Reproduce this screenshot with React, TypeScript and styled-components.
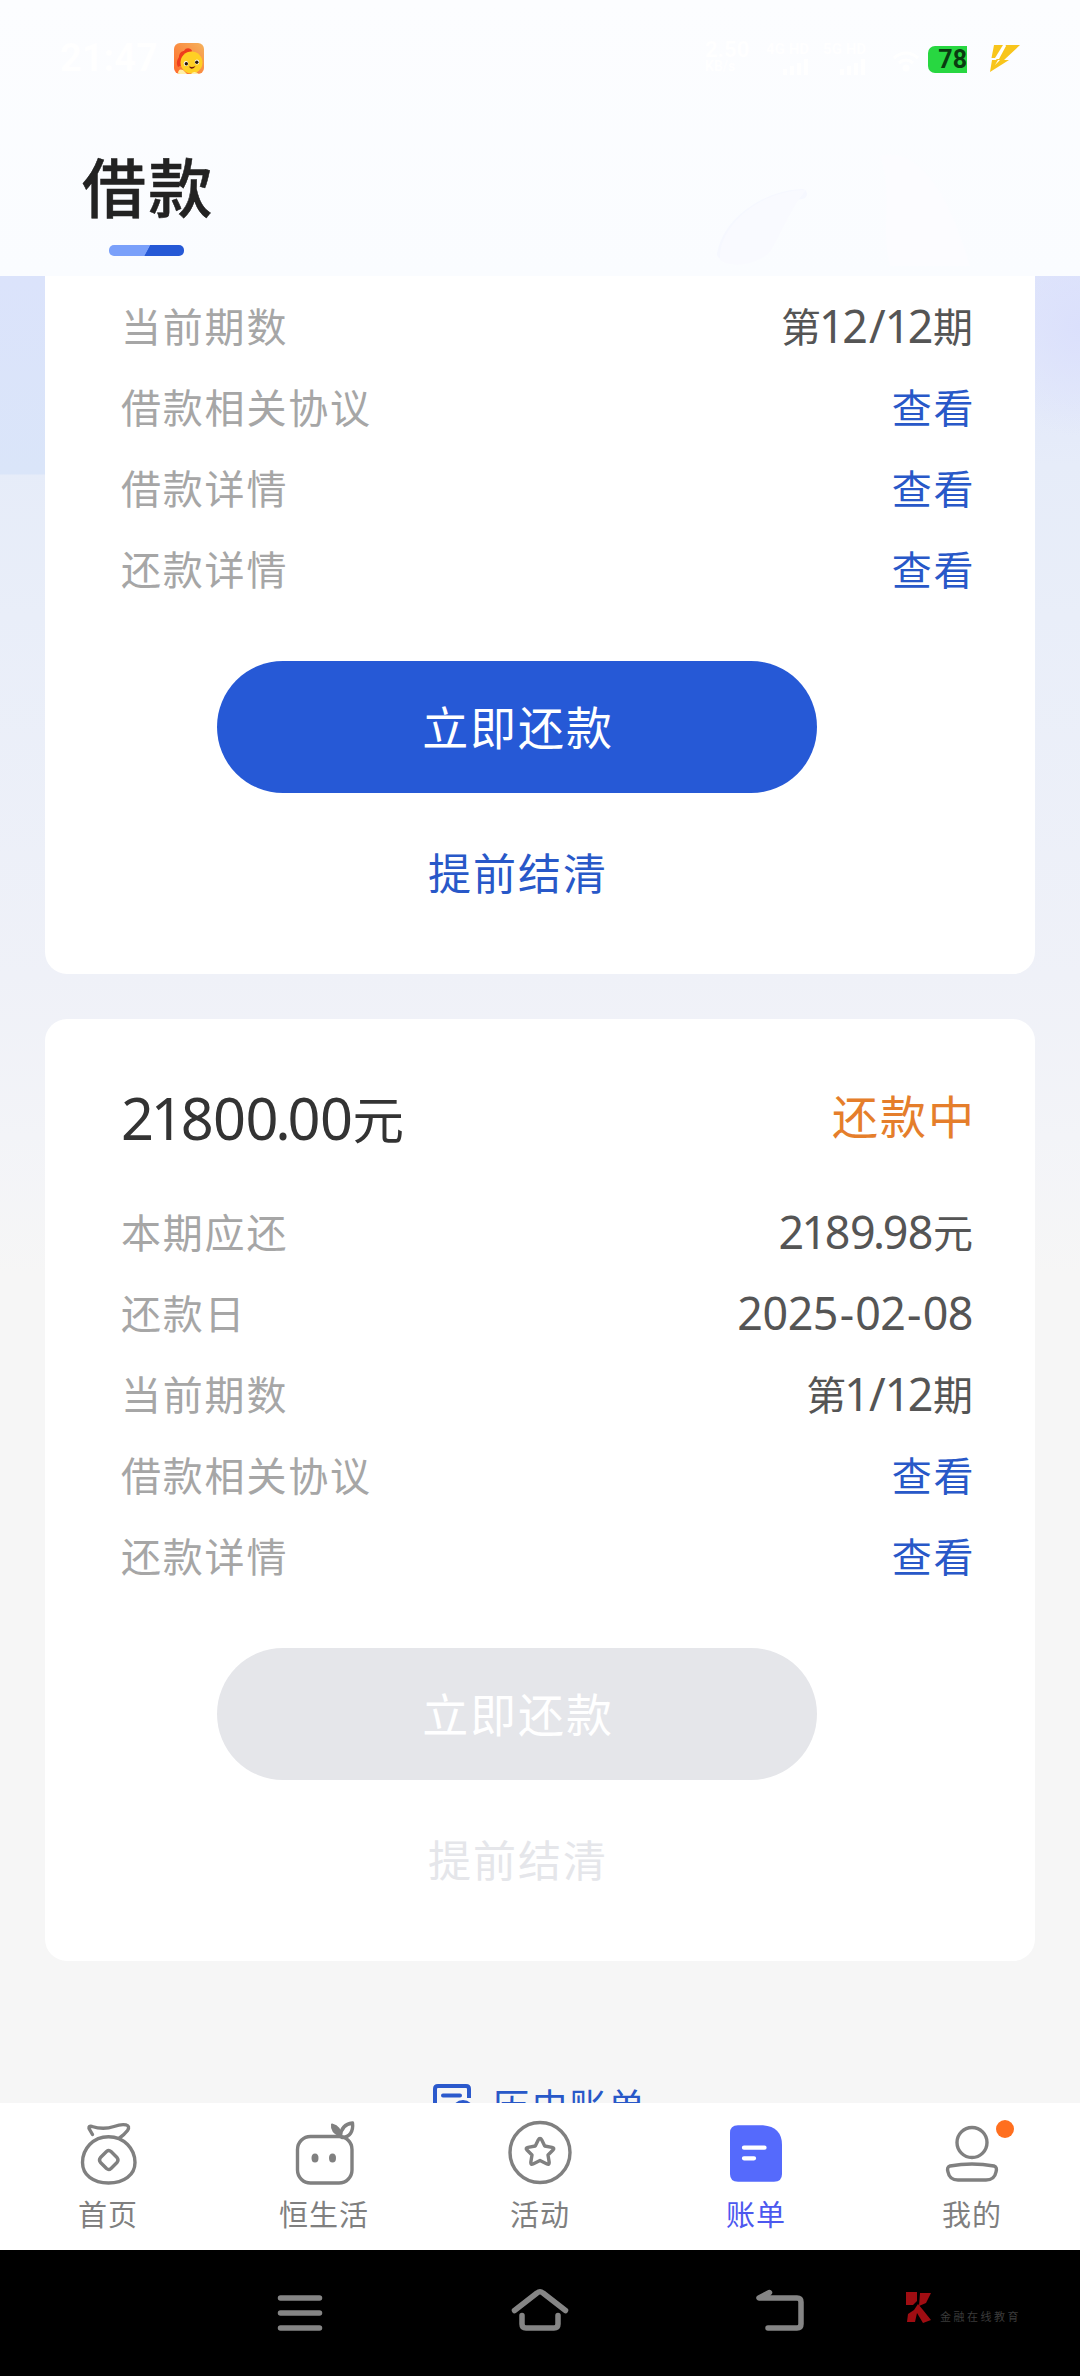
import React from 'react';
import styled, { createGlobalStyle } from 'styled-components';

const cjk = `"Noto Sans CJK SC", "Noto Sans", sans-serif`;

const GlobalStyle = createGlobalStyle`
  * { box-sizing: border-box; }
  body { margin: 0; font-family: ${cjk}; background: #f6f6f6; }
`;

const Screen = styled.div`
  width: 1080px;
  height: 2376px;
  display: flex;
  flex-direction: column;
  overflow: hidden;
  background: #f6f6f6;
`;

const Header = styled.header`
  position: relative;
  height: 276px;
  flex: none;
  background: linear-gradient(#fcfdff, #fafcff);
`;

const HeaderArt = styled.svg`
  position: absolute;
  right: 0;
  bottom: 0;
`;

const StatusBar = styled.div`
  position: relative;
  display: flex;
  align-items: center;
  height: 116px;
  padding: 0 60px;
`;

const Clock = styled.span`
  width: 114px;
  font: 700 38px/1 Roboto, sans-serif;
  color: #fff;
`;

const StatusRight = styled.div`
  display: flex;
  align-items: center;
  margin-left: auto;
`;

const NetSpeed = styled.div`
  width: 56px;
  font: 700 22px/16px Roboto, sans-serif;
  color: #fff;
  small {
    display: block;
    font-size: 14px;
  }
`;

const Signal = styled.div`
  display: flex;
  flex-direction: column;
  align-items: flex-end;
  gap: 3px;
  width: 48px;
  margin-right: 9px;
  font: 700 15px/14px Roboto, sans-serif;
  color: #fff;
`;

const Wifi = styled.svg`
  margin: 6px 8px 0 17px;
`;

const Battery = styled.div`
  width: 39px;
  height: 27px;
  margin: 2px 23px 0 0;
  border-radius: 7px 0 0 7px;
  background: #28d741;
  color: #0a3a10;
  font: 700 25px/28px Roboto, sans-serif;
  text-align: right;
`;

const TitleBlock = styled.div`
  position: relative;
  display: flex;
  flex-direction: column;
  align-items: flex-start;
  padding-left: 82px;
`;

const Title = styled.h1`
  margin: 23px 0 0;
  height: 90px;
  font-size: 64px;
  line-height: 90px;
  font-weight: 500;
  letter-spacing: 2.2px;
  -webkit-text-stroke: 0.5px #222;
  color: #222;
`;

const TitleMark = styled.div`
  width: 75px;
  height: 11px;
  margin: 16px 0 0 27px;
  border-radius: 5px;
  background: linear-gradient(118deg, #7aa0fa 50.5%, #2659d6 51.5%);
`;

const ScrollArea = styled.main`
  height: 1827px;
  flex: none;
  overflow: hidden;
  display: flex;
  flex-direction: column;
  align-items: center;
  gap: 45px;
  background:
    radial-gradient(ellipse 90px 110px at 1080px 50px, #dbe0fc 0%, rgba(219, 224, 252, 0) 100%),
    linear-gradient(#dbe3fb 0, #dae5f9 198px, rgba(218, 229, 249, 0) 199px) 0 0 / 45px 100% no-repeat,
    linear-gradient(#dfe5fb 0, #e6ecf9 190px, #e9eef9 340px, #eff1f8 700px, #f3f4f8 860px, #f6f6f6 1000px);
`;

const Card = styled.section<{ $first?: boolean }>`
  display: flex;
  flex-direction: column;
  width: 990px;
  height: ${(p) => (p.$first ? 698 : 942)}px;
  flex: none;
  padding: ${(p) => (p.$first ? '11px' : '44px')} 61px 0 76px;
  border-radius: ${(p) => (p.$first ? '0 0 22px 22px' : '22px')};
  background: #fff;
`;

const CardHead = styled.div`
  display: flex;
  justify-content: space-between;
  align-items: center;
  height: 102px;
  margin-bottom: 28px;
`;

const Amount = styled.div`
  padding-top: 5px;
  font-size: 51.5px;
  line-height: 66px;
  color: #333;
`;

const Status = styled.div`
  font-size: 46px;
  letter-spacing: 2px;
  margin-right: -2px;
  color: #e57e2b;
`;

const Row = styled.div`
  display: flex;
  justify-content: space-between;
  align-items: center;
  height: 81px;
  padding-bottom: 5px;
  font-size: 40px;
  line-height: 60px;
`;

const Label = styled.span`
  color: #a6a6a6;
  letter-spacing: 1.8px;
`;

const Value = styled.span<{ $link?: boolean }>`
  color: ${(p) => (p.$link ? '#2858c8' : '#555')};
  letter-spacing: ${(p) => (p.$link ? 1.6 : 0)}px;
  margin-right: ${(p) => (p.$link ? -1 : 1)}px;
`;

type GlyphKind = 'plain' | 'narrow' | 'wide';
const glyphMargin: Record<GlyphKind, string> = { plain: '0', narrow: '-0.045em', wide: '0.035em' };

const Digit = styled.span<{ $kind: GlyphKind }>`
  font-family: "Noto Sans", sans-serif;
  font-size: 1.12em;
  line-height: 0;
  vertical-align: -0.02em;
  letter-spacing: -0.01em;
  margin: 0 ${(p) => glyphMargin[p.$kind]};
`;

const PayButton = styled.button<{ $disabled?: boolean }>`
  width: 600px;
  height: 132px;
  flex: none;
  margin: 50px 0 0 96px;
  padding: 0 0 4px 2px;
  border: 0;
  border-radius: 66px;
  background: ${(p) => (p.$disabled ? '#e5e6ea' : '#2659d6')};
  color: #fff;
  font: 400 46px/66px ${cjk};
  letter-spacing: 1.9px;
`;

const SettleLink = styled.div<{ $disabled?: boolean }>`
  width: 600px;
  margin: 45px 0 0 97px;
  text-align: center;
  font-size: 43px;
  line-height: 66px;
  letter-spacing: 2px;
  color: ${(p) => (p.$disabled ? '#e5e6ea' : '#2858c8')};
`;

const History = styled.div`
  display: flex;
  align-items: flex-start;
  gap: 17px;
  margin: 72px 0 0 0;
  font-size: 37px;
  line-height: 54px;
  letter-spacing: 1.6px;
  color: #2858c8;
  svg {
    margin-top: 6px;
  }
`;

const TabBar = styled.nav`
  display: grid;
  grid-template-columns: repeat(5, 1fr);
  height: 147px;
  flex: none;
  background: #fff;
`;

const Tab = styled.div<{ $active?: boolean }>`
  display: flex;
  flex-direction: column;
  align-items: center;
  padding-top: 15px;
  color: ${(p) => (p.$active ? '#4c58ef' : '#7f7f7f')};
  font-size: 29px;
  line-height: 40px;
  letter-spacing: 1px;
  svg {
    margin-bottom: 3px;
    overflow: visible;
  }
`;

const SystemBar = styled.div`
  display: grid;
  grid-template-columns: 180px 240px 240px 240px 180px;
  align-items: center;
  justify-items: center;
  height: 126px;
  flex: none;
  background: #000;
`;

const Watermark = styled.div`
  display: flex;
  align-items: flex-end;
  justify-self: start;
  gap: 7px;
  height: 36px;
  margin: -13px 0 0 3px;
  font-size: 11px;
  line-height: 18px;
  letter-spacing: 2.5px;
  color: #3b3b3b;
  white-space: nowrap;
`;

const kindOf = (part: string): GlyphKind =>
  part === '1' || part === '.' ? 'narrow' : part === '-' || part === '/' ? 'wide' : 'plain';

const Money = ({ text }: { text: string }) => (
  <>
    {text.split(/([1./-])|([^\d./-]+)/).filter(Boolean).map((part, i) =>
      /[\d./-]/.test(part) ? (
        <Digit key={i} $kind={kindOf(part)}>{part}</Digit>
      ) : (
        part
      ),
    )}
  </>
);

type Line = { label: string; value: string; link?: boolean };

const Lines = ({ items }: { items: Line[] }) => (
  <>
    {items.map((it) => (
      <Row key={it.label}>
        <Label>{it.label}</Label>
        <Value $link={it.link}>{it.link ? it.value : <Money text={it.value} />}</Value>
      </Row>
    ))}
  </>
);

const firstLoan: Line[] = [
  { label: '当前期数', value: '第12/12期' },
  { label: '借款相关协议', value: '查看', link: true },
  { label: '借款详情', value: '查看', link: true },
  { label: '还款详情', value: '查看', link: true },
];

const secondLoan: Line[] = [
  { label: '本期应还', value: '2189.98元' },
  { label: '还款日', value: '2025-02-08' },
  { label: '当前期数', value: '第1/12期' },
  { label: '借款相关协议', value: '查看', link: true },
  { label: '还款详情', value: '查看', link: true },
];

const MascotIcon = () => (
  <svg width="30" height="31" viewBox="0 0 30 31">
    <defs>
      <linearGradient id="mascot" x1="0" y1="1" x2="1" y2="0">
        <stop offset="0" stopColor="#ff6a2b" />
        <stop offset="1" stopColor="#f5b25c" />
      </linearGradient>
      <clipPath id="mascotClip"><rect width="30" height="31" rx="6" /></clipPath>
    </defs>
    <g clipPath="url(#mascotClip)">
      <rect width="30" height="31" fill="url(#mascot)" />
      <path d="M4 24C2 20 3 17 5 14C5 10 8 8 10 8C12 4 17 5 18 8L12 20Z" fill="#ee3d1c" />
      <circle cx="17.5" cy="19.5" r="11" fill="#ffcf24" />
      <path d="M4 31Q4 25 9 27L13 31ZM17 31Q20 27 25 31Z" fill="#fff0a8" />
      <ellipse cx="12" cy="20.500" rx="2.300" ry="2.500" fill="#fff" />
      <ellipse cx="23" cy="19" rx="2.300" ry="2.500" fill="#fff" />
      <circle cx="12.300" cy="20.800" r="1.700" fill="#2b1608" />
      <circle cx="22.800" cy="19.300" r="1.700" fill="#2b1608" />
      <path d="M15 23.500Q18.500 24.500 21.500 23Q20 26 17.500 25.800Q15.800 25.500 15 23.500Z" fill="#7a1d08" />
    </g>
  </svg>
);

const Bars = () => (
  <svg width="26" height="16" viewBox="0 0 26 16" fill="#fff">
    <rect x="0" y="10" width="4" height="6" /><rect x="7" y="7" width="4" height="9" />
    <rect x="14" y="4" width="4" height="12" /><rect x="21" y="0" width="4" height="16" />
  </svg>
);

const line = { fill: 'none', stroke: '#808080', strokeWidth: 3.4, strokeLinecap: 'round', strokeLinejoin: 'round' } as const;

const HomeIcon = () => (
  <svg width="72" height="72" viewBox="0 0 72 72" {...line}>
    <path d="M36.500 18.700C52 18.700 63 31 63 44.500C63 57 52 65 36.500 65C21 65 10.500 57 10.500 44.500C10.500 31 21 18.700 36.500 18.700Z" />
    <path d="M20.500 16.500L17 10.500Q16.500 7.500 20 8.500C28 11 36 10.500 42 8.500C52 5 59.500 6.500 55.500 12.500Q52 17 47.500 20" />
    <path d="M34.500 33.500Q36.800 31.500 39 33.500L45 39.500Q47 42 45 44.500L39 50.500Q36.800 52.500 34.500 50.500L28.500 44.500Q26.500 42 28.500 39.500Z" />
  </svg>
);

const LifeIcon = () => (
  <svg width="72" height="72" viewBox="0 0 72 72" {...line}>
    <rect x="9.500" y="18.500" width="54.500" height="46.500" rx="13" />
    <ellipse cx="27" cy="40" rx="3.500" ry="4.500" fill="#808080" stroke="none" />
    <ellipse cx="44.500" cy="40" rx="3.500" ry="4.500" fill="#808080" stroke="none" />
    <path d="M52 18Q43 14 44 6.500Q53 9 52.500 18Z" fill="#808080" strokeWidth="2" />
    <path d="M52.500 18C53 10 57 6 64.500 5C65.500 13 62 19.500 54 19.500" />
  </svg>
);

const StarIcon = () => (
  <svg width="72" height="72" viewBox="0 0 72 72" {...line}>
    <circle cx="36" cy="34.500" r="30" />
    <path d="M36 20.500Q37 20.500 37.800 22L40.700 28L48 29.300Q51 30 49 32L44 37L45.200 44.300Q45.300 47 43 46L36 42.500L29 46Q26.700 47 26.800 44.300L28 37L23 32Q21 30 24 29.300L31.300 28L34.200 22Q35 20.500 36 20.500Z" />
  </svg>
);

const BillIcon = () => (
  <svg width="72" height="72" viewBox="0 0 72 72">
    <path d="M18 7.300H43Q62 9 62 27V56Q62 63.700 54 63.700H18Q10 63.700 10 56V15Q10 7.300 18 7.300Z" fill="#556afc" />
    <path d="M24 29.700H44.500M24 40.300H34" stroke="#fff" strokeWidth="4.300" strokeLinecap="round" />
  </svg>
);

const MeIcon = () => (
  <svg width="72" height="72" viewBox="0 0 72 72" {...line}>
    <circle cx="36" cy="24.500" r="15" />
    <path d="M14 48Q36 44 58 48Q61.500 49 60 54Q58.500 62 50 62H22Q13.500 62 12 54Q10.500 49 14 48Z" />
    <circle cx="69" cy="11" r="9" fill="#ff6f1f" stroke="none" />
  </svg>
);

const tabs = [
  { name: '首页', icon: <HomeIcon /> },
  { name: '恒生活', icon: <LifeIcon /> },
  { name: '活动', icon: <StarIcon /> },
  { name: '账单', icon: <BillIcon />, active: true },
  { name: '我的', icon: <MeIcon /> },
];

const nav = { fill: 'none', stroke: '#858585', strokeWidth: 5.5, strokeLinecap: 'round', strokeLinejoin: 'round' } as const;

export default function App() {
  return (
    <Screen>
      <GlobalStyle />
      <Header>
        <HeaderArt width="400" height="140" viewBox="0 0 400 140" fill="none">
          <path d="M42 118C48 86 84 60 122 58" stroke="#f6f8ff" strokeWidth="10" strokeLinecap="round" />
          <path d="M40 124C38 90 80 54 126 54C112 70 100 100 90 116C76 130 50 132 40 124Z" fill="#f9faff" />
          <path d="M200 20C240 10 270 60 290 130H210C200 90 214 60 200 20Z" fill="#fcfcff" />
        </HeaderArt>
        <StatusBar>
          <Clock>21:47</Clock>
          <MascotIcon />
          <StatusRight>
            <NetSpeed>2.50<small>KB/s</small></NetSpeed>
            <Signal>4G HD<Bars /></Signal>
            <Signal>5G HD<Bars /></Signal>
            <Wifi width="28" height="22" viewBox="0 0 28 22" fill="none" stroke="#fff" strokeWidth="3">
              <path d="M2 8Q14 -2 26 8M7 13Q14 7 21 13" /><circle cx="14" cy="18" r="2" fill="#fff" />
            </Wifi>
            <Battery>78</Battery>
            <svg width="30" height="27" viewBox="0 0 30 27" fill="#f8c51c">
              <path d="M4 0H13L5 13H1.500Z" />
              <path d="M16 0H30L14 15H19L0 27L2 15H6Z" />
              <path d="M14 0L5 14H9L16 1ZM2 15L8 15L5 20L10 15H13" fill="#fff" />
            </svg>
          </StatusRight>
        </StatusBar>
        <TitleBlock>
          <Title>借款</Title>
          <TitleMark />
        </TitleBlock>
      </Header>

      <ScrollArea>
        <Card $first>
          <Lines items={firstLoan} />
          <PayButton>立即还款</PayButton>
          <SettleLink>提前结清</SettleLink>
        </Card>
        <Card>
          <CardHead>
            <Amount><Money text="21800.00元" /></Amount>
            <Status>还款中</Status>
          </CardHead>
          <Lines items={secondLoan} />
          <PayButton $disabled>立即还款</PayButton>
          <SettleLink $disabled>提前结清</SettleLink>
        </Card>
        <History>
          <svg width="42" height="42" viewBox="0 0 42 42" fill="none" stroke="#2b59cc" strokeWidth="4">
            <path d="M36 14V5Q36 2 33 2H5Q2 2 2 5V36Q2 39 5 39H18" />
            <path d="M10 11.500H27M10 21H18" strokeLinecap="round" />
            <circle cx="30" cy="27" r="9" />
          </svg>
          历史账单
        </History>
      </ScrollArea>

      <TabBar>
        {tabs.map((t) => (
          <Tab key={t.name} $active={t.active}>
            {t.icon}
            {t.name}
          </Tab>
        ))}
      </TabBar>

      <SystemBar>
        <span />
        <svg width="60" height="60" viewBox="0 0 60 60" {...nav}>
          <path d="M10.500 15H49.500M10.500 30H49.500M10.500 45H49.500" />
        </svg>
        <svg width="60" height="60" viewBox="0 0 60 60" {...nav}>
          <path d="M4.500 27.500L27 10Q30 7.500 33 10L55.500 27.500" />
          <path d="M12 32.500V41Q12 45 16 45H44Q48 45 48 41V32.500" />
        </svg>
        <svg width="60" height="60" viewBox="0 0 60 60" {...nav}>
          <path d="M19.500 9.500L9 15H47Q51 15 51 19V41Q51 45 47 45H18" />
        </svg>
        <Watermark>
          <svg width="30" height="36" viewBox="0 0 30 36" fill="#a00d12">
            <path d="M3 3H14V12L10 16H3Z" />
            <path d="M17 4H28L23 14L16 17Z" />
            <path d="M15 15L20 21L28 31L20 34L14 24L12 33H4L5 25L11 21Z" />
          </svg>
          金融在线教育
        </Watermark>
      </SystemBar>
    </Screen>
  );
}
